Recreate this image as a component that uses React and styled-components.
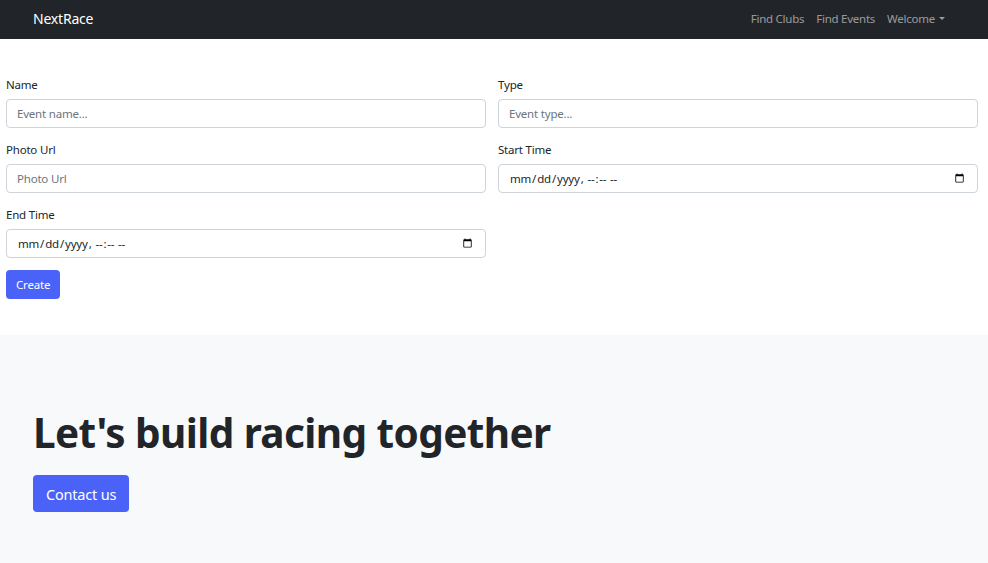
import React from 'react';
import styled, { createGlobalStyle } from 'styled-components';

const GlobalStyle = createGlobalStyle`
  * { box-sizing: border-box; }
  body {
    margin: 0;
    background: #fff;
    font-family: 'Noto Sans', 'Open Sans', sans-serif;
    color: #212529;
  }
`;

const App = () => {
  return (
    <>
      <GlobalStyle />
      <Navbar>
        <Brand>NextRace</Brand>
        <NavLinks>
          <NavLink>Find Clubs</NavLink>
          <NavLink>Find Events</NavLink>
          <NavLink>
            Welcome <Caret />
          </NavLink>
        </NavLinks>
      </Navbar>

      <Form onSubmit={e => e.preventDefault()}>
        <FieldGrid>
          <Field>
            <Label>Name</Label>
            <Input type="text" placeholder="Event name..." />
          </Field>
          <Field>
            <Label>Type</Label>
            <Input type="text" placeholder="Event type..." />
          </Field>
          <Field>
            <Label>Photo Url</Label>
            <Input type="text" placeholder="Photo Url" />
          </Field>
          <Field>
            <Label>Start Time</Label>
            <Input type="datetime-local" />
          </Field>
          <Field>
            <Label>End Time</Label>
            <Input type="datetime-local" />
          </Field>
        </FieldGrid>
        <Button type="submit">Create</Button>
      </Form>

      <Hero>
        <HeroTitle>Let's build racing together</HeroTitle>
        <Button large>Contact us</Button>
      </Hero>
    </>
  );
};

const Navbar = styled.nav`
  height: 39px;
  background-color: #212529;
  display: flex;
  align-items: center;
  justify-content: space-between;
  padding: 0 43px 2px 33px;
`;

const Brand = styled.a`
  color: #fff;
  font-size: 14px;
  letter-spacing: -0.2px;
`;

const NavLinks = styled.div`
  display: flex;
  gap: 12px;
`;

const NavLink = styled.a`
  display: flex;
  align-items: center;
  gap: 4px;
  color: rgba(255, 255, 255, 0.55);
  font-size: 11.5px;
  letter-spacing: -0.25px;
`;

const Caret = styled.span`
  width: 0;
  height: 0;
  border-left: 3px solid transparent;
  border-right: 3px solid transparent;
  border-top: 3px solid rgba(255, 255, 255, 0.55);
`;

const Form = styled.form`
  padding: 37px 10px 36px 6px;
`;

const FieldGrid = styled.div`
  display: grid;
  grid-template-columns: 1fr 1fr;
  column-gap: 12px;
  row-gap: 13px;
  margin-bottom: 12px;
`;

const Field = styled.div`
  display: flex;
  flex-direction: column;
`;

const Label = styled.label`
  font-size: 11.5px;
  line-height: 18px;
  margin-bottom: 5px;
  letter-spacing: -0.2px;
`;

const Input = styled.input`
  height: 29px;
  padding: 0 10px;
  border: 1px solid #ced4da;
  border-radius: 4px;
  font-family: 'Noto Sans', sans-serif;
  font-size: 11.5px;
  letter-spacing: -0.2px;
  color: #212529;
  background: #fff;

  &::placeholder {
    color: #6c757d;
  }
`;

const Button = styled.button`
  height: ${p => (p.large ? '37px' : '29px')};
  padding: 0 ${p => (p.large ? '13px' : '10px')};
  border: none;
  border-radius: 4px;
  background-color: #4b62f8;
  color: #fff;
  font-family: 'Noto Sans', sans-serif;
  font-size: ${p => (p.large ? '14.5px' : '11.5px')};
  letter-spacing: -0.2px;
  align-self: flex-start;
`;

const Hero = styled.section`
  background-color: #f8f9fa;
  padding: 73px 33px 60px;
  display: flex;
  flex-direction: column;
  align-items: flex-start;
  gap: 17px;
`;

const HeroTitle = styled.h1`
  margin: 0;
  font-size: 40.5px;
  line-height: 50px;
  font-weight: 700;
  letter-spacing: -0.6px;
  color: #212529;
`;

export default App;
